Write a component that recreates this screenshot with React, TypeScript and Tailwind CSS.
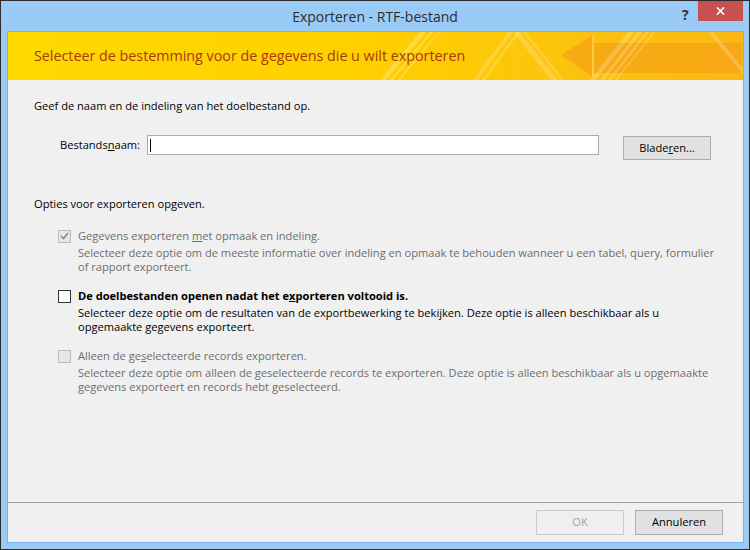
import React from "react";

const font = { fontFamily: '"Open Sans", "Noto Sans", sans-serif' };

function Check({ state }: { state: "disabledChecked" | "enabled" | "disabled" }) {
  if (state === "enabled") {
    return <div className="w-[13px] h-[13px] border border-[#333333] bg-white shrink-0" />;
  }
  return (
    <div className="w-[13px] h-[13px] border border-[#bcbcbc] bg-[#e6e6e6] shrink-0 flex items-center justify-center">
      {state === "disabledChecked" && (
        <svg width="9" height="8" viewBox="0 0 9 8">
          <path d="M1 4 L3.5 6.5 L8 1" fill="none" stroke="#8a8a8a" strokeWidth="1.6" />
        </svg>
      )}
    </div>
  );
}

function Option({
  state,
  label,
  desc,
}: {
  state: "disabledChecked" | "enabled" | "disabled";
  label: React.ReactNode;
  desc: string[];
}) {
  const disabled = state !== "enabled";
  return (
    <div className="pl-[50px]">
      <div className="flex items-center gap-[7px] h-[16px]">
        <Check state={state} />
        <span className={disabled ? "text-[#6d6d6d]" : "text-black font-bold"}>{label}</span>
      </div>
      <div className={`pl-[20px] mt-[2px] leading-[14px] ${disabled ? "text-[#6d6d6d]" : "text-black"}`}>
        {desc.map((d, i) => (
          <div key={i} className="whitespace-nowrap">{d}</div>
        ))}
      </div>
    </div>
  );
}

function Banner() {
  return (
    <div className="relative h-[48px] bg-gradient-to-r from-[#ffd900] via-[#ffcf00] to-[#f9b814] overflow-hidden flex items-center">
      <svg className="absolute inset-0" width="735" height="48" viewBox="0 0 735 48">
        <g fill="#ffffff" fillOpacity="0.25">
          <polygon points="372,48 378,48 418,0 412,0" />
          <polygon points="382,48 385,48 425,0 422,0" />
          <polygon points="390,48 392,48 432,0 430,0" />
        </g>
        <g fill="#ffffff" fillOpacity="0.2">
          <polygon points="465,48 470,48 505,0 500,0" />
          <polygon points="474,48 477,48 512,0 509,0" />
          <polygon points="505,0 512,0 550,48 543,48" />
          <polygon points="515,0 518,0 556,48 553,48" />
        </g>
        <polygon points="553,23 585,3 585,11 734,11 734,41 585,41 585,45" fill="#f5a315" fillOpacity="0.75" />
        <rect x="584" y="3" width="2" height="42" fill="#ffd34a" fillOpacity="0.8" />
        <g fill="#ffffff" fillOpacity="0.22">
          <polygon points="582,48 588,48 626,0 620,0" />
          <polygon points="592,48 596,48 634,0 630,0" />
          <polygon points="600,48 603,48 641,0 638,0" />
          <polygon points="607,48 609,48 647,0 645,0" />
          <polygon points="700,0 705,0 735,36 735,42" />
        </g>
      </svg>
      <div className="relative pl-[26px] text-[14.3px] text-[#a8380e]" style={font}>
        Selecteer de bestemming voor de gegevens die u wilt exporteren
      </div>
    </div>
  );
}

export default function App() {
  return (
    <div className="w-[750px] h-[550px] border border-[#2b2b2b] bg-[#99cbf6] flex flex-col" style={font}>
      <div className="relative h-[30px] flex items-center justify-center shrink-0">
        <span className="text-[14px] text-[#2d2d2d] mt-[1px]">Exporteren - RTF-bestand</span>
        <span className="absolute left-[681px] top-[3px] text-[14px] font-bold text-[#333]">?</span>
        <div className="absolute left-[697px] top-0 w-[45px] h-[20px] bg-[#c75050] flex items-center justify-center">
          <svg width="9" height="8" viewBox="0 0 9 8">
            <path d="M1 0.5 L8 7.5 M8 0.5 L1 7.5" stroke="#ffffff" strokeWidth="1.7" />
          </svg>
        </div>
      </div>
      <div className="ml-[6px] mr-[5px] h-[512px] border border-[#7fb3e5] bg-[#f0f0f0] flex flex-col text-[11.1px] text-black">
        <Banner />
        <div className="flex-1 pt-[18px]">
          <div className="pl-[26px] leading-[16px]">Geef de naam en de indeling van het doelbestand op.</div>
          <div className="flex items-start mt-[21px] h-[25px]">
            <div className="w-[139px] pl-[52px] h-[20px] flex items-center">
              Bestands<u>n</u>aam:
            </div>
            <div className="w-[452px] h-[20px] border border-[#ababab] bg-white flex items-center pl-[2px]">
              <div className="w-[1px] h-[13px] bg-black" />
            </div>
            <div className="ml-[24px] mt-[1px] w-[88px] h-[24px] border border-[#adadad] bg-[#e1e1e1] flex items-center justify-center">
              Blade<u>r</u>en...
            </div>
          </div>
          <div className="pl-[26px] leading-[16px] mt-[36px]">Opties voor exporteren opgeven.</div>
          <div className="mt-[16px] flex flex-col gap-[14px]">
            <Option
              state="disabledChecked"
              label={<>Gegevens exporteren <u>m</u>et opmaak en indeling.</>}
              desc={[
                "Selecteer deze optie om de meeste informatie over indeling en opmaak te behouden wanneer u een tabel, query, formulier",
                "of rapport exporteert.",
              ]}
            />
            <Option
              state="enabled"
              label={<>De doelbestanden openen nadat het e<u>x</u>porteren voltooid is.</>}
              desc={[
                "Selecteer deze optie om de resultaten van de exportbewerking te bekijken. Deze optie is alleen beschikbaar als u",
                "opgemaakte gegevens exporteert.",
              ]}
            />
            <Option
              state="disabled"
              label={<>Alleen de ge<u>s</u>electeerde records exporteren.</>}
              desc={[
                "Selecteer deze optie om alleen de geselecteerde records te exporteren. Deze optie is alleen beschikbaar als u opgemaakte",
                "gegevens exporteert en records hebt geselecteerd.",
              ]}
            />
          </div>
        </div>
        <div className="h-[1px] bg-[#a0a0a0] shrink-0" />
        <div className="h-[39px] shrink-0 flex justify-end items-start pt-[7px] pr-[20px] gap-[11px]">
          <div className="w-[88px] h-[25px] border border-[#cccccc] bg-[#efefef] text-[#a3a3a3] flex items-center justify-center">
            OK
          </div>
          <div className="w-[88px] h-[25px] border border-[#adadad] bg-[#e1e1e1] flex items-center justify-center">
            Annuleren
          </div>
        </div>
      </div>
    </div>
  );
}
